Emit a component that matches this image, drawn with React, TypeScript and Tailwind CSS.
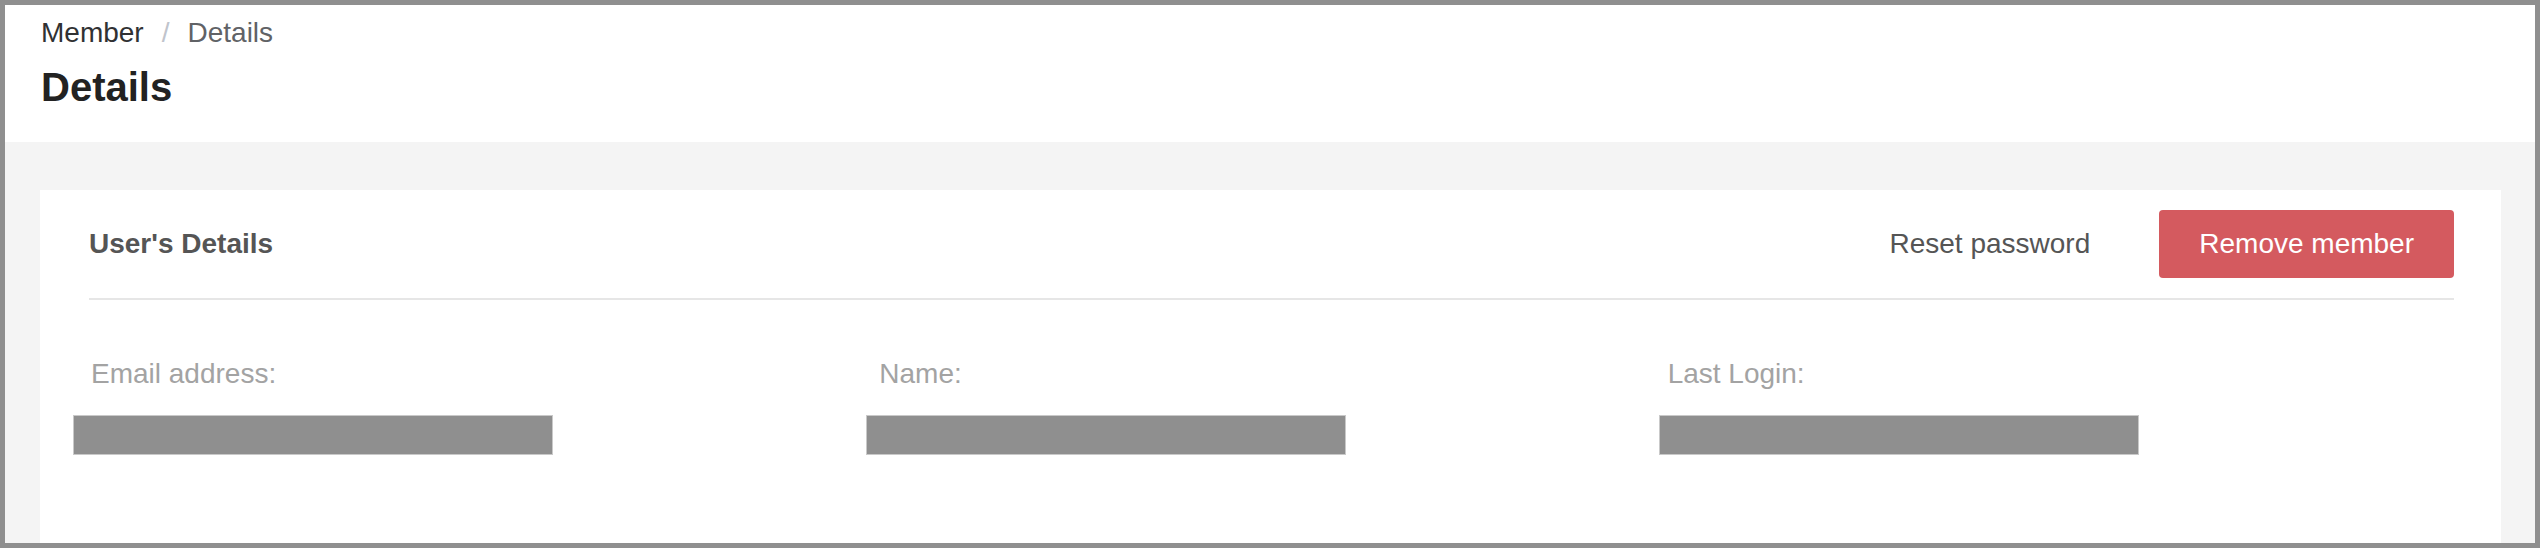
import React from "react";

const fields = [
  { label: "Email address:", barClass: "ml-[-16px]" },
  { label: "Name:", barClass: "ml-[-11px]" },
  { label: "Last Login:", barClass: "ml-[-7px]" },
];

export default function App() {
  return (
    <div className="w-[2540px] h-[548px] border-[5px] border-[#8f8f8f] bg-[#f4f4f4] overflow-hidden flex flex-col font-['Liberation_Sans',Arial,sans-serif]">
      <header className="bg-white h-[137px] shrink-0 pl-[36px] pt-[14px]">
        <nav className="flex items-center text-[28px] leading-[28px]">
          <span className="text-[#303133]">Member</span>
          <span className="mx-[18px] text-[#c0c4cc]">/</span>
          <span className="text-[#606266]">Details</span>
        </nav>
        <h1 className="mt-[20px] text-[40px] leading-[40px] font-bold text-[#222222]">Details</h1>
      </header>
      <main className="flex-1 flex flex-col pt-[48px] pl-[35px] pr-[34px]">
        <section className="flex-1 bg-white pl-[49px] pr-[47px]">
          <div className="flex items-center justify-between py-[20px] border-b-2 border-[#e6e6e6]">
            <h2 className="text-[28px] leading-[28px] font-bold text-[#555555]">User's Details</h2>
            <div className="flex items-center gap-[69px]">
              <button className="text-[28px] leading-[28px] text-[#555555]">Reset password</button>
              <button className="h-[68px] px-[40px] rounded-[4px] bg-[#d45a5f] text-white text-[28px] leading-[28px]">
                Remove member
              </button>
            </div>
          </div>
          <div className="grid grid-cols-3 pt-[60px]">
            {fields.map((f) => (
              <div key={f.label} className="flex flex-col">
                <span className="pl-[2px] text-[28px] leading-[28px] font-light text-[#a3a3a3]">{f.label}</span>
                <div className={`mt-[27px] h-[40px] w-[480px] bg-[#8f8f8f] border border-[#c9c9c9] ${f.barClass}`} />
              </div>
            ))}
          </div>
        </section>
      </main>
    </div>
  );
}
